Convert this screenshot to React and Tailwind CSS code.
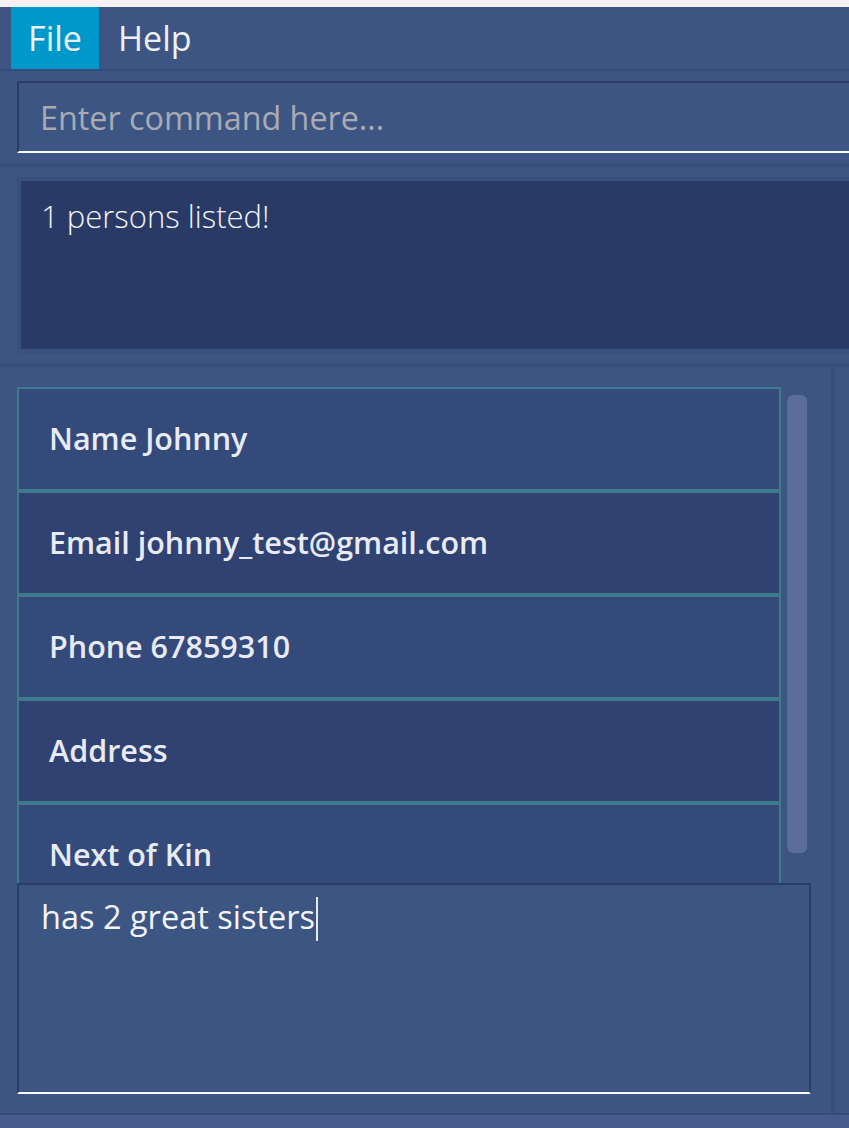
import React from "react"

const fields = [
  { label: "Name Johnny", bg: "bg-[#334a7b]" },
  { label: "Email johnny_test@gmail.com", bg: "bg-[#2f4272]" },
  { label: "Phone 67859310", bg: "bg-[#334a7b]" },
  { label: "Address", bg: "bg-[#2f4272]" },
  { label: "Next of Kin", bg: "bg-[#334a7b]" },
]

function MenuBar() {
  return (
    <div className="h-[62px] flex pl-[11px] text-[34px] text-[#eef0f6]">
      <div className="w-[88px] bg-[#0098ca] flex items-center justify-center">File</div>
      <div className="pl-[19px] flex items-center">Help</div>
    </div>
  )
}

function FieldCell({ field }) {
  return (
    <div className={`h-[104px] border-2 border-[#3d7a8b] flex items-center pl-[30px] ${field.bg}`}>
      <span className="text-[30.5px] font-semibold text-[#e8ebf3]">{field.label}</span>
    </div>
  )
}

export default function App() {
  return (
    <div className="relative w-[849px] h-[1128px] overflow-hidden bg-[#3d5583] flex flex-col font-['Open_Sans',sans-serif]">
      <div className="h-[7px] bg-[#f6eff3]" />
      <MenuBar />
      <div className="h-[2px] bg-[#384c7b]" />

      {/* command box */}
      <div className="h-[92px] pt-[10px] pl-[17px]">
        <div className="h-[72px] border-t-2 border-l-2 border-[#2b3b66] border-b-2 border-b-white flex items-center pl-[21px]">
          <span className="text-[32.3px] text-[#a9abb3]">Enter command here...</span>
        </div>
      </div>
      <div className="h-[4px] bg-[#384e7d]" />

      {/* result display */}
      <div className="h-[196px] pt-[10px] pl-[17px]">
        <div className="h-[176px] border-4 border-r-0 border-[#394f7e] bg-[#293a66] pl-[20px] pt-[14px]">
          <span className="text-[31px] font-light text-[#f2f4f8] leading-[42px]">1 persons listed!</span>
        </div>
      </div>
      <div className="h-[4px] bg-[#384e7d]" />

      {/* list area */}
      <div className="flex-1 flex">
        <div className="w-[831px] flex pt-[20px] pl-[17px]">
          <div className="w-[764px] flex flex-col">
            {fields.map((f) => (
              <FieldCell key={f.label} field={f} />
            ))}
          </div>
          <div className="ml-[6px] mt-[8px] w-[20px] h-[458px] rounded-[6px] bg-[#5a6d9b]" />
        </div>
        <div className="w-[4px] bg-[#394e7c]" />
      </div>
      <div className="h-[2px] bg-[#374b79]" />
      <div className="h-[13px] bg-[#465b8b]" />

      {/* remark editor over the list */}
      <div className="absolute left-[17px] top-[883px] w-[794px] h-[211px] bg-[#3d5583] border-2 border-[#2c3c69] border-b-white pl-[22px] pt-[10px]">
        <span className="text-[32.5px] text-[#f2f4f8] leading-[44px]">has 2 great sisters</span>
        <span className="inline-block align-top ml-[1px] mt-[2px] w-[2px] h-[44px] bg-[#e6e9f0]" />
      </div>
    </div>
  )
}
